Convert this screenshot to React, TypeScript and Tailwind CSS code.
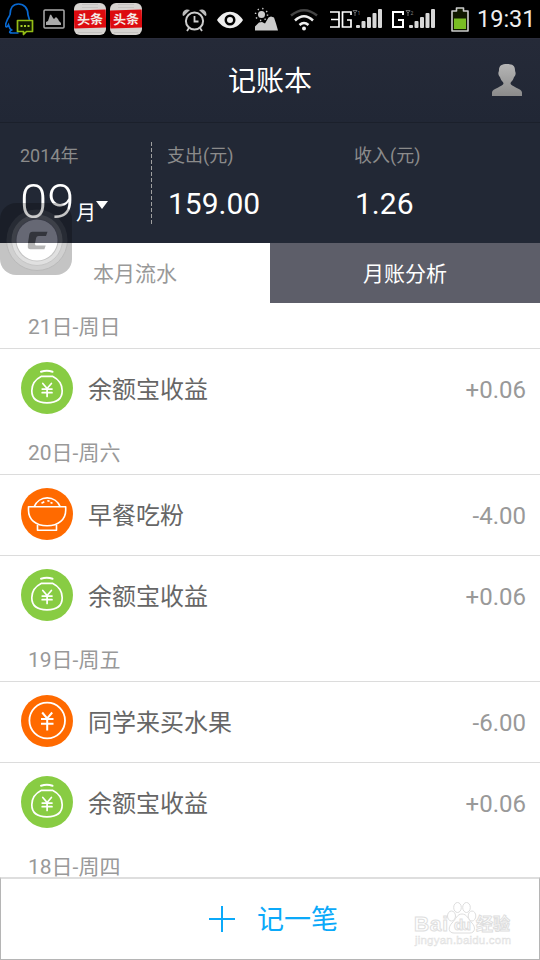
import React from 'react';

const MoneyBag = () => (
  <svg width="52" height="52" viewBox="0 0 52 52" fill="none" stroke="#fff" strokeWidth="1.7" strokeLinecap="round" strokeLinejoin="round">
    <circle cx="26" cy="26" r="26" fill="#88cc43" stroke="none" />
    <path d="M20 9.8q6-2 11.500 0" strokeWidth="2" />
    <path d="M20.500 14.300h11c6 3 9.700 8.500 9.700 14.500 0 8-5.500 12-15.200 12s-15.200-4-15.200-12c0-6 3.700-11.500 9.700-14.500Z" />
    <path d="M21.800 21.500l4.300 5 4.300-5M26.100 26.500v8M21.200 27.100h9.800M21.200 30.700h9.800" />
  </svg>
);

const Bowl = () => (
  <svg width="52" height="52" viewBox="0 0 52 52" fill="none" stroke="#fff" strokeWidth="1.600" strokeLinejoin="round">
    <circle cx="26" cy="26" r="26" fill="#ff6a00" stroke="none" />
    <path d="M7.500 18.800h37.200v3.500c0 9-7 15.500-18.600 15.500S7.500 31.300 7.500 22.300Z" />
    <path d="M13.300 18.500c2-5 7-8.600 12.900-8.600s10.900 3.600 12.900 8.600M16.500 37v5.200h19V37" />
    <path d="M20.500 15.200l2.800-1.500M26.300 12.800l2.200.3M29.500 14.500l2 .8" />
  </svg>
);

const Coin = () => (
  <svg width="52" height="52" viewBox="0 0 52 52" fill="none" stroke="#fff" strokeWidth="1.800">
    <circle cx="26" cy="26" r="26" fill="#ff6a00" stroke="none" />
    <circle cx="26.200" cy="25.500" r="17.800" />
    <path d="M21.200 17.500l5 6 5-6M26.200 23.500v12M20 24.100h12.500M20 28.800h12.500" strokeWidth="2" />
  </svg>
);

const icons = { bag: MoneyBag, bowl: Bowl, coin: Coin };

type Entry = { icon: keyof typeof icons; name: string; amount: string };

const days: { label: string; entries: Entry[] }[] = [
  { label: '21日-周日', entries: [{ icon: 'bag', name: '余额宝收益', amount: '+0.06' }] },
  {
    label: '20日-周六',
    entries: [
      { icon: 'bowl', name: '早餐吃粉', amount: '-4.00' },
      { icon: 'bag', name: '余额宝收益', amount: '+0.06' },
    ],
  },
  {
    label: '19日-周五',
    entries: [
      { icon: 'coin', name: '同学来买水果', amount: '-6.00' },
      { icon: 'bag', name: '余额宝收益', amount: '+0.06' },
    ],
  },
  { label: '18日-周四', entries: [] },
];

const NewsBadge = () => (
  <div className="flex h-8 w-8 shrink-0 flex-col overflow-hidden rounded-[6px] bg-[#d6d3d0]">
    <div className="mx-2 mt-[1px] h-[4px] border-y border-[#c4c2c0]" />
    <div className="mt-[2px] flex h-[18px] -rotate-2 items-center justify-center bg-[#dd0b0f] text-[13px] leading-none font-bold whitespace-nowrap text-[#f4e9e6]">头条</div>
    <div className="mx-1 mt-[2px] h-[3px] border-b border-[#c4c2c0]" />
  </div>
);

const Signal = ({ label }: { label: '1' | '2' }) => (
  <svg className="overflow-visible" width="27" height="20" viewBox="0 0 27 20" fill="#d8d8d8">
    <rect x="0" y="16" width="4" height="3" rx="1" />
    <rect x="5.500" y="12" width="4" height="7" rx="1" />
    <rect x="11" y="8" width="4" height="11" rx="1" />
    <rect x="16.500" y="4" width="4" height="15" rx="1" />
    <rect x="22" y="0" width="4" height="19" rx="1" />
    <path d="M-3 1.500h4L-1 4zM-1 4v3" fill="none" stroke="#888" strokeWidth=".8" />
    <text x="1.500" y="5.500" fontSize="5" fill="#888">{label}</text>
  </svg>
);

const StatusBar = () => (
  <div className="flex h-[38px] items-center bg-black">
    <svg className="ml-[5px] shrink-0" width="29" height="34" viewBox="0 0 29 34" fill="none">
      <path d="M5 13C5 6 8 2 13.500 2S23 6 23 13l1.500 5M5 13c-2.500 4-4.500 8-4.500 11 1 2 2.500 0 3-1 .5 2 1.500 4 3 5-3 2-2 3 1 3h6" stroke="#0869d2" strokeWidth="1.700" />
      <path d="M12.500 18.500h15v11h-6l-3 3v-3h-6z" fill="#101800" stroke="#94bd16" strokeWidth="1.700" strokeLinejoin="round" />
      <path d="M15.500 24h2M19 24h2M22.500 24h2" stroke="#a6cc28" strokeWidth="2" />
    </svg>
    <svg className="ml-[9px] shrink-0" width="22" height="20" viewBox="0 0 22 20">
      <rect x="1" y="1" width="20" height="18" rx="1" fill="none" stroke="#aaa" strokeWidth="1.500" />
      <path d="M3 16v-3l2-1 2-6 1-.5L10 9l1 1 2-2 2 2 1 2 2 2v2z" fill="#aaa" />
    </svg>
    <div className="ml-[9px] flex gap-1"><NewsBadge /><NewsBadge /></div>
    <svg className="ml-10 shrink-0 translate-y-px" width="25" height="24" viewBox="0 0 25 24" fill="none" stroke="#ccc">
      <circle cx="12.500" cy="13" r="8.600" strokeWidth="2" />
      <path d="M12.500 8v5.500h4M7 20l-2 3M18 20l2 3" strokeWidth="1.800" />
      <path d="M.7 7.500C-.2 3 4 .2 8 2L1.700 8zM24.300 7.500C25.200 3 21 .2 17 2l6.300 6z" fill="#bbb" stroke="none" />
    </svg>
    <svg className="ml-[10px] shrink-0 translate-y-px" width="26" height="18" viewBox="0 0 26 18">
      <path d="M0 9C7-2 19-2 26 9 19 20 7 20 0 9Z" fill="#eee" />
      <circle cx="13" cy="9" r="5.500" fill="#000" /><circle cx="13" cy="9" r="3" fill="#eee" />
    </svg>
    <svg className="ml-[11px] shrink-0" width="24" height="24" viewBox="0 0 24 24" fill="#ccc">
      <circle cx="7.500" cy="7.500" r="3.500" />
      <circle cx="7.500" cy="7.500" r="6" fill="none" stroke="#ccc" strokeWidth="1.500" strokeDasharray="1.300 3.410" />
      <path d="M1 23.500v-4l4-4 3-.5 3 1.500 3.500-6 2.500-1 3 1 2 6 2 7z" />
    </svg>
    <svg className="ml-3 shrink-0" width="28" height="23" viewBox="0 0 28 23" fill="none" strokeWidth="2.500">
      <path d="M1 7.500Q14-3 27 7.500" stroke="#444" />
      <path d="M5 12.500Q14 4 23 12.500" stroke="#eee" />
      <path d="M9.500 17q4.500-4 9 0" stroke="#eee" />
      <circle cx="14" cy="20.500" r="2" fill="#eee" />
    </svg>
    <svg className="ml-3 shrink-0 translate-y-px" width="22" height="18" viewBox="0 0 22 18" fill="none" stroke="#fff" strokeWidth="1.700">
      <path d="M0 1h9v15H0M1 8.500h8M21 4V1h-8.500v15H21V9h-4" />
    </svg>
    <div className="ml-[4px] shrink-0"><Signal label="1" /></div>
    <svg className="ml-[9px] shrink-0 translate-y-px" width="12" height="18" viewBox="0 0 12 18" fill="none" stroke="#fff" strokeWidth="2">
      <path d="M11 4V1H1v15h10V9H6" />
    </svg>
    <div className="ml-[5px] shrink-0"><Signal label="2" /></div>
    <svg className="ml-[15px] shrink-0" width="18" height="25" viewBox="0 0 18 25">
      <path d="M1 4h4.500V1h7v3H17v20H1Z" fill="#101800" stroke="#ccc" strokeWidth="1.600" strokeLinejoin="round" />
      <path d="M3 11.500h12V22H3z" fill="#79bd23" />
    </svg>
    <span className="ml-[8px] pt-px text-[23.5px] leading-[37px] text-[#eee]">19:31</span>
  </div>
);

/* The translucent assistive button straddles the dark summary and the white tab. */
const FloatingButton = () => (
  <svg className="absolute top-[203px] left-0" width="72" height="72" viewBox="0 0 72 72">
    <defs>
      <clipPath id="upper"><rect width="72" height="40" /></clipPath>
      <clipPath id="lower"><rect y="40" width="72" height="32" /></clipPath>
    </defs>
    <rect width="72" height="72" rx="16" fill="#000" fillOpacity=".23" />
    <g clipPath="url(#upper)">
      <circle cx="37" cy="37" r="30.500" fill="#fff" fillOpacity=".06" />
      <circle cx="37" cy="37" r="25.500" fill="#fff" fillOpacity=".1" />
      <circle cx="37" cy="37" r="21.500" fill="#393b47" />
      <circle cx="37" cy="37" r="20.500" fill="#666874" />
    </g>
    <g clipPath="url(#lower)">
      <circle cx="37" cy="37" r="30.500" fill="#d0d0d0" stroke="#bababa" />
      <circle cx="37" cy="37" r="25.500" fill="#e0e0e0" stroke="#c6c6c6" />
      <circle cx="37" cy="37" r="21.500" fill="#c4c4c4" />
      <circle cx="37" cy="37" r="20.500" fill="#fff" />
    </g>
    <path clipPath="url(#upper)" d="M32.500 28.800h15l-1.500 4.200h-7.500q-2 0-2.400 2l-1.400 7h-7l1.500-10q.5-3.200 3.300-3.200Z" fill="#33353c" />
    <path d="M28 40h7v1q0 1.500 1.500 1.500h9.200l-1.300 3.800H30.500q-3 0-2.700-3.300z" fill="#b6b6b6" />
  </svg>
);

const Watermark = () => (
  <svg className="absolute top-[898px] left-[410px]" width="110" height="52" viewBox="0 0 110 52" fill="#fff" stroke="#dedede" strokeWidth="1">
    <ellipse cx="41.500" cy="18" rx="4" ry="5" />
    <ellipse cx="47.500" cy="9.500" rx="3.800" ry="5" />
    <ellipse cx="56.500" cy="9.500" rx="3.800" ry="5" />
    <ellipse cx="62" cy="18" rx="3.800" ry="5" />
    <path d="M52 16c5 0 6 5 10 9 4 4 3 10-2 10H44c-6 0-6-6-2-10 4-4 5-9 10-9Z" />
    <g fontFamily="Liberation Sans, Noto Sans CJK SC, sans-serif">
      <text x="4" y="33" fontSize="21" textLength="34" fontWeight="bold">Bai</text>
      <text x="44" y="32" fontSize="15" textLength="17" fontWeight="bold">du</text>
      <text x="66" y="32" fontSize="17" textLength="34" fontWeight="bold">经验</text>
      <text x="5" y="46" fontSize="11.500" textLength="96" strokeWidth=".4" fill="#f0f0f0">jingyan.baidu.com</text>
    </g>
  </svg>
);

export default function App() {
  return (
    <div className="relative flex h-[960px] w-[540px] flex-col overflow-hidden bg-white font-[Roboto,'Noto_Sans_CJK_SC',sans-serif] font-normal">
      <StatusBar />
      <header className="flex h-[85px] shrink-0 items-center border-t border-b border-t-[#2b2d3c] border-b-[#1b202b] bg-linear-to-b from-[#252a38] to-[#212735] text-white">
        <div className="w-[60px]" />
        <h1 className="flex-1 pt-[3px] text-center text-[28px] leading-10">记账本</h1>
        <div className="flex w-[60px] justify-center">
          <svg className="mr-[6px] -translate-y-px" width="30" height="32" viewBox="0 0 30 32">
            <defs>
              <linearGradient id="person" x1="0" y1="0" x2="0" y2="1">
                <stop stopColor="#b5b5b5" /><stop offset="1" stopColor="#8b8b8b" />
              </linearGradient>
            </defs>
            <path d="M15 0c5 0 8 1.500 8 6 0 2 1 2 .5 4.500-.5 2-1.500 2-2 4-.5 2-3 3.500-3 5 0 3 11.500 5 11.500 9V32H0v-3.500c0-4 11.500-6 11.500-9 0-1.500-2.500-3-3-5-.5-2-1.500-2-2-4C6 8 7 8 7 6c0-4.500 3-6 8-6Z" fill="url(#person)" />
          </svg>
        </div>
      </header>
      <section className="flex h-[120px] shrink-0 bg-[#222835] pt-[19px]">
        <div className="w-[151px] pl-5">
          <div className="pt-px text-[18px] leading-[26px] text-[#8b8b8b]">2014年</div>
          <div className="mt-[5px] flex h-[56px] items-baseline leading-[56px] text-white">
            <span className="w-[56px] text-[49px] font-[350]">09</span>
            <span className="translate-y-[2px] text-[20px]">月</span>
            <svg className="-translate-y-[9px]" width="12" height="8" viewBox="0 0 12 8"><path d="M0 0h12L6 8z" fill="#fff" /></svg>
          </div>
        </div>
        <div className="h-[82px] w-px bg-[repeating-linear-gradient(to_bottom,#a0a0a0_0_4px,transparent_4px_6px)]" />
        <div className="w-[187px] pl-[15px]">
          <div className="pt-px text-[18px] leading-[26px] text-[#8b8b8b]">支出(元)</div>
          <div className="mt-[15px] pl-px text-[30px] leading-[40px] text-white">159.00</div>
        </div>
        <div className="pl-[15px]">
          <div className="pt-px text-[18px] leading-[26px] text-[#8b8b8b]">收入(元)</div>
          <div className="mt-[15px] pl-px text-[30px] leading-[40px] text-white">1.26</div>
        </div>
      </section>
      <nav className="grid h-[60px] shrink-0 grid-cols-2 text-center text-[21px] leading-[58px]">
        <div className="bg-white pt-[2px] text-[#999]">本月流水</div>
        <div className="bg-[#5d5e69] pt-[2px] text-white">月账分析</div>
      </nav>
      <main className="min-h-0 flex-1 overflow-hidden">
        {days.map((day) => (
          <section key={day.label}>
            <h2 className="h-[46px] border-b border-[#dcdcdc] pt-px pl-7 text-[21px] leading-[46px] font-normal text-[#999]">{day.label}</h2>
            <div className="divide-y divide-[#dcdcdc]">
              {day.entries.map((e) => {
                const Icon = icons[e.icon];
                return (
                  <div key={e.name} className="box-content flex h-20 items-center">
                    <div className="mr-[15.4px] ml-[20.6px] -translate-y-px"><Icon /></div>
                    <span className="flex-1 pt-[2px] text-[24px] text-[#666]">{e.name}</span>
                    <span className="mr-[14px] pt-[2px] text-[24px] text-[#999]">{e.amount}</span>
                  </div>
                );
              })}
            </div>
          </section>
        ))}
      </main>
      <footer className="flex h-[83px] shrink-0 items-center border border-t-2 border-[#b5b5b5] border-t-[#dedede] pl-[208px] text-[#0ba9f9]">
        <svg width="26" height="26" viewBox="0 0 26 26"><path d="M0 13h26M13 0v26" stroke="currentColor" strokeWidth="2" /></svg>
        <span className="ml-[22px] pt-[2px] text-[27px]">记一笔</span>
      </footer>
      <FloatingButton />
      <Watermark />
    </div>
  );
}
